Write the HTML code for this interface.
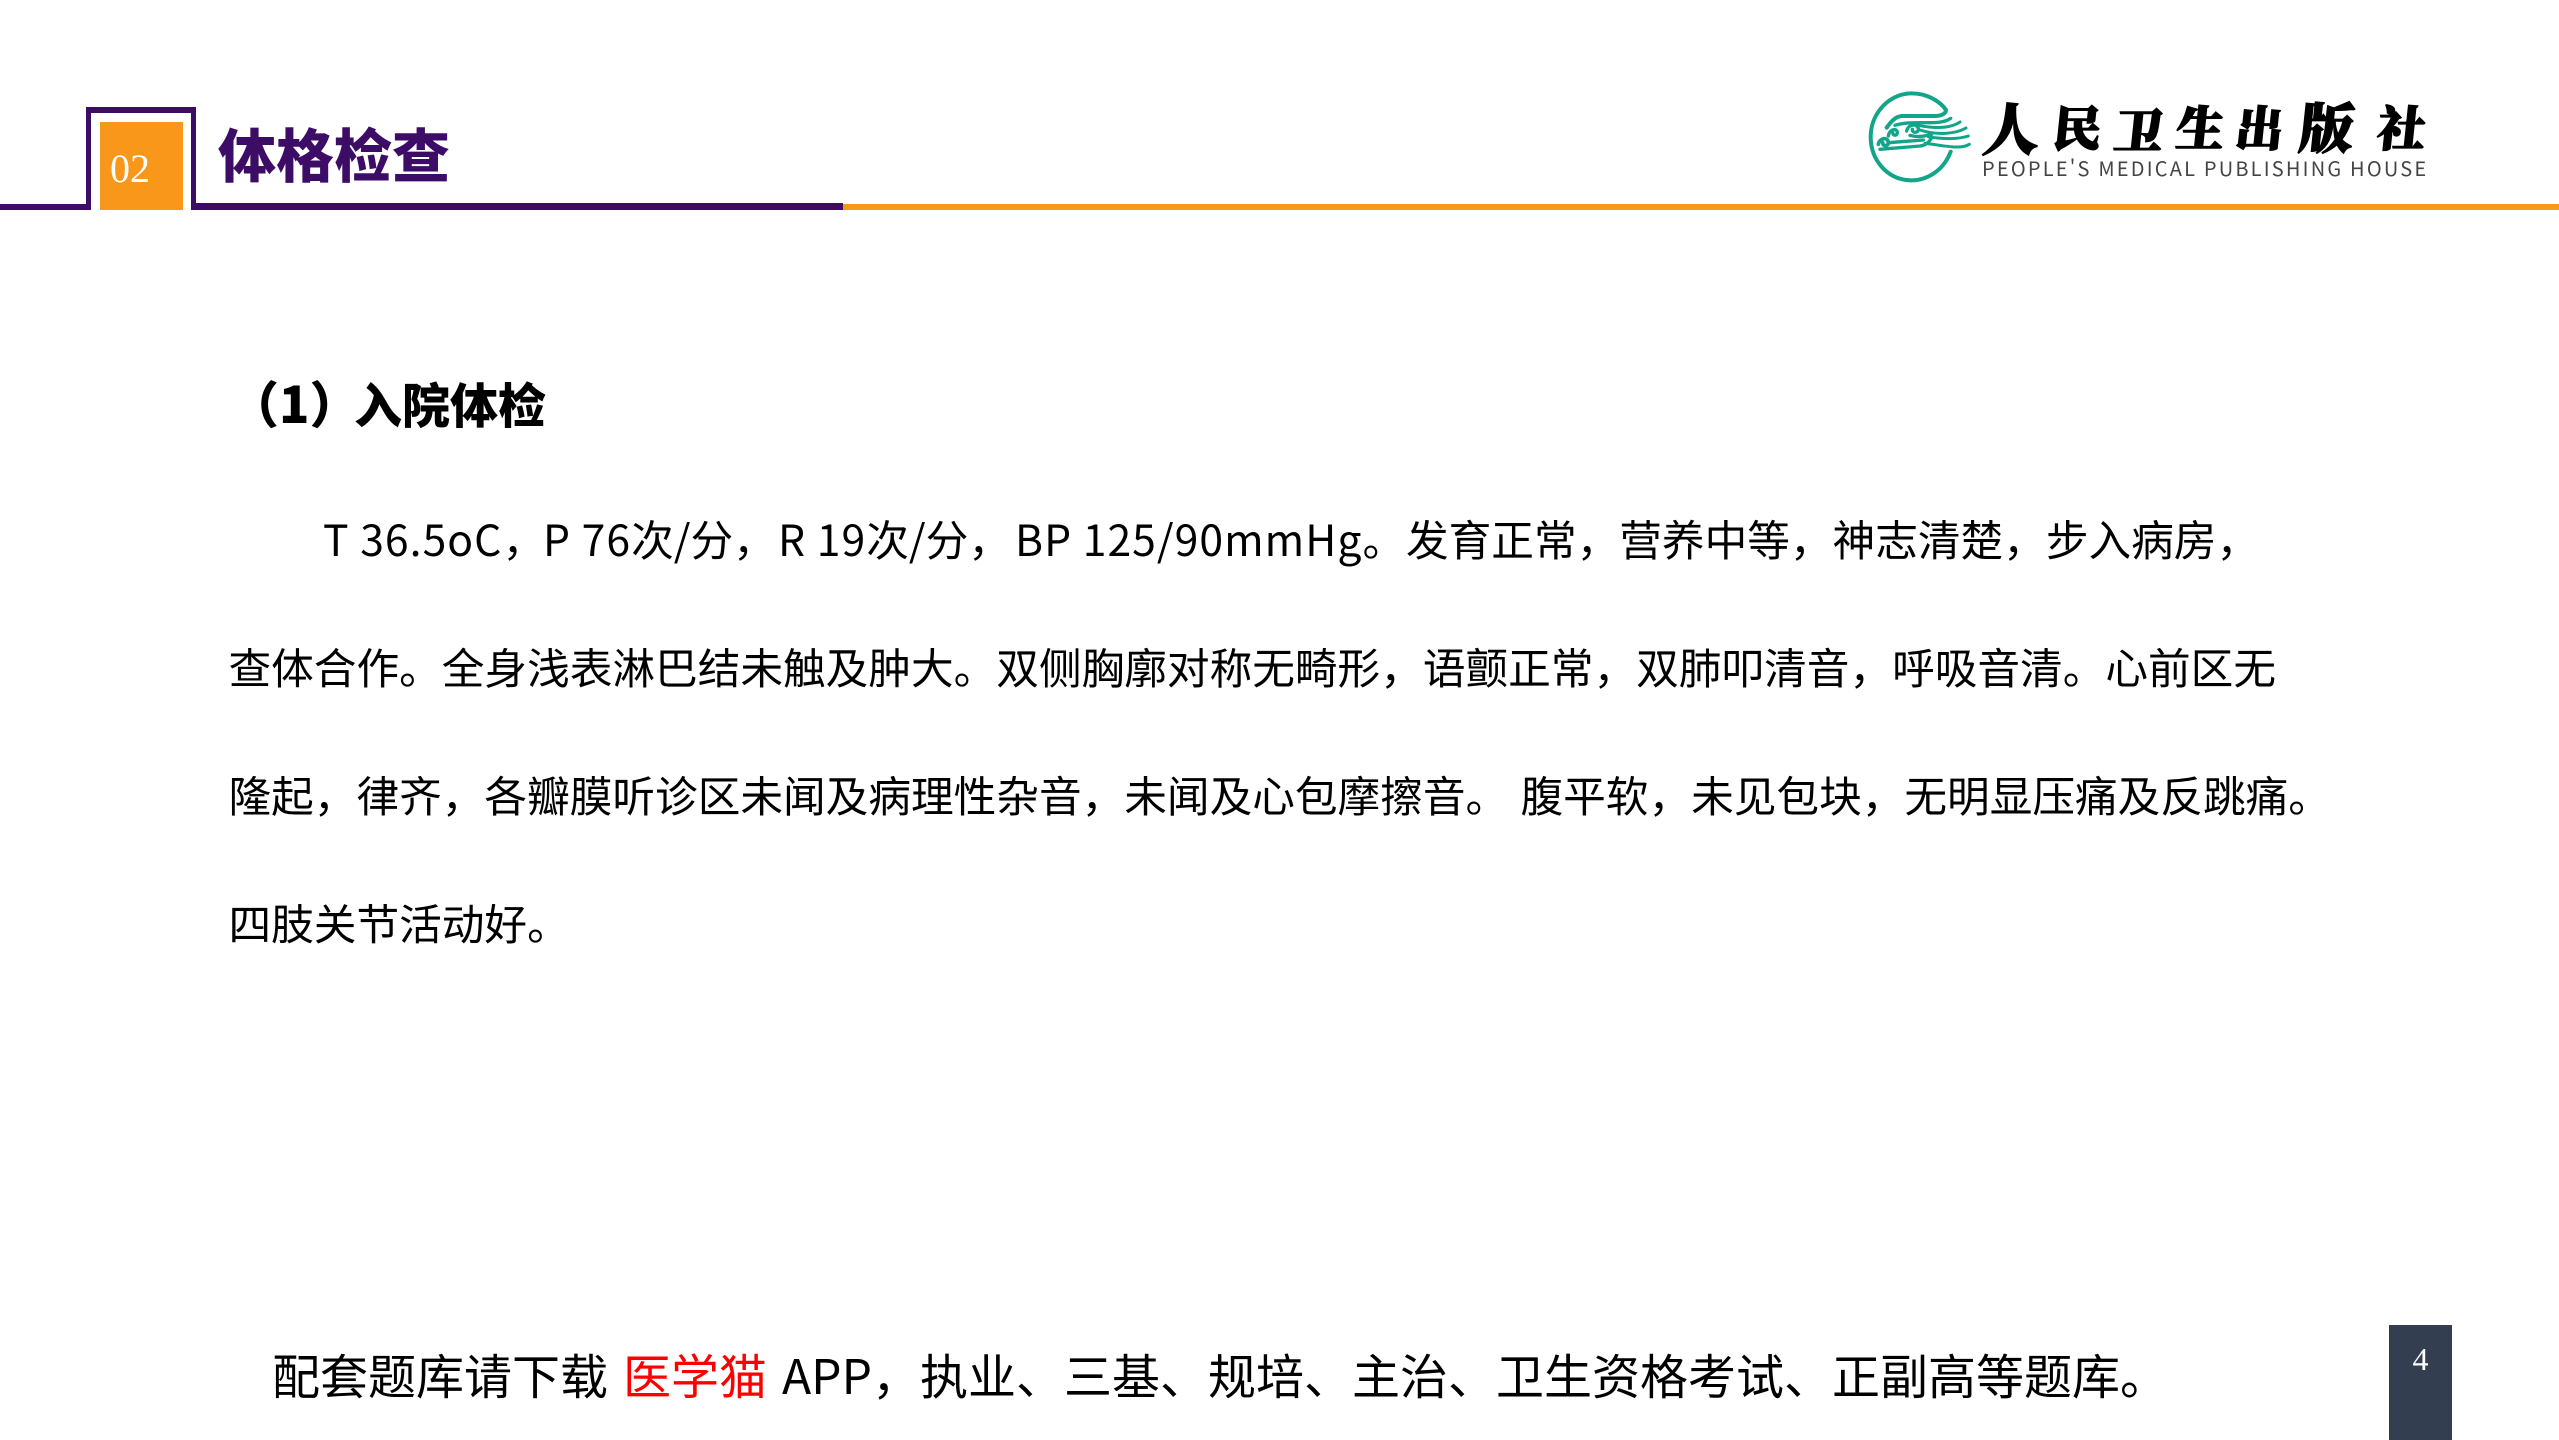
<!DOCTYPE html>
<html lang="zh-CN">
<head>
<meta charset="utf-8">
<title>体格检查</title>
<style>
html,body{margin:0;padding:0;background:#fff;}
body{position:relative;width:2559px;height:1440px;overflow:hidden;font-family:"Liberation Sans","Noto Sans CJK SC",sans-serif;color:#000;}
.a{position:absolute;white-space:pre;}
.t{font-family:"Noto Sans CJK SC","Liberation Sans",sans-serif;font-size:42.67px;line-height:60px;height:60px;}
.t i{font-style:normal;letter-spacing:1.05px;}
.b{font-family:"Noto Sans CJK SC","Liberation Sans",sans-serif;font-size:48px;line-height:70px;height:70px;}
.c{font-family:"Noto Serif CJK SC",serif;font-weight:900;font-size:48px;line-height:60px;height:60px;-webkit-text-stroke:1.6px #000;transform:skewX(-6deg);}
</style>
</head>
<body>
<!-- header lines -->
<div class="a" style="left:0;top:204px;width:91px;height:6px;background:#3c0c66"></div>
<div class="a" style="left:191px;top:203px;width:652px;height:7px;background:#3c0c66"></div>
<div class="a" style="left:843px;top:204px;width:1716px;height:6px;background:#f9971a"></div>
<div class="a" style="left:86px;top:107px;width:110px;height:6px;background:#3c0c66"></div>
<div class="a" style="left:86px;top:107px;width:5px;height:103px;background:#3c0c66"></div>
<div class="a" style="left:191px;top:107px;width:5px;height:103px;background:#3c0c66"></div>
<div class="a" style="left:100px;top:122px;width:83px;height:88px;background:#f9971a"></div>
<div class="a" style="left:110px;top:146px;font-family:'Liberation Serif',serif;font-size:40px;line-height:46px;color:#fff">02</div>
<div class="a" style="left:218px;top:111px;font-family:'Noto Sans CJK SC',sans-serif;font-weight:900;font-size:58px;line-height:82px;color:#3c0c66">体格检查</div>

<!-- logo -->
<svg class="a" style="left:1860px;top:86px" width="120" height="105" viewBox="0 0 360 315" fill="none" stroke="#12a58a" stroke-linecap="round" stroke-linejoin="round">
<path stroke-width="12" d="M272 197C250 255 200 283 155 283C85 283 32 225 32 152C32 80 90 22 155 22C200 22 240 45 258 72C258 82 245 90 225 90L125 90C105 92 92 108 80 125"/>
<path stroke-width="10" d="M105 118C160 100 240 122 272 97"/>
<path stroke-width="9" d="M165 116C220 128 270 128 300 108"/>
<path stroke-width="9" d="M180 132C230 148 285 145 318 126"/>
<path stroke-width="9" d="M205 152C250 160 295 160 325 150"/>
<path stroke-width="9" d="M195 172C250 178 300 192 328 175"/>
<path stroke-width="10" d="M85 150C88 128 112 125 112 140C112 150 98 150 98 140"/>
<path stroke-width="10" d="M140 135C145 112 175 112 175 130C175 142 155 142 157 130"/>
<path stroke-width="11" d="M55 175C58 155 85 152 85 170C85 182 68 182 68 170"/>
<path stroke-width="10" d="M60 190L180 180C195 178 205 172 215 155"/>
<path stroke-width="10" d="M85 170L190 162"/>
<path stroke-width="10" d="M150 148C175 155 195 150 215 145"/>
</svg>
<div class="a c" style="left:1984px;top:95px;font-size:56px;line-height:64px;height:64px">人</div>
<div class="a c" style="left:2054px;top:96px;">民</div>
<div class="a c" style="left:2115px;top:99px;">卫</div>
<div class="a c" style="left:2177px;top:96px;">生</div>
<div class="a c" style="left:2236px;top:96px;">出</div>
<div class="a c" style="left:2300px;top:94px;font-size:54px;line-height:64px;height:64px">版</div>
<div class="a c" style="left:2378px;top:96px;">社</div>
<div class="a" style="left:1982px;top:156px;font-family:'Noto Sans CJK SC',sans-serif;font-size:20px;line-height:24px;letter-spacing:2.2px;color:#444">PEOPLE'S MEDICAL PUBLISHING HOUSE</div>

<!-- heading -->
<div class="a" style="left:229px;top:367px;font-family:'Noto Sans CJK SC',sans-serif;font-weight:900;font-size:50px;line-height:70px">（1）</div>
<div class="a" style="left:354px;top:367px;font-family:'Noto Sans CJK SC',sans-serif;font-weight:900;font-size:48px;line-height:70px">入院体检</div>

<!-- body line 1 -->
<div class="a t" style="left:323px;top:509px"><i>T 36.5oC</i>，</div>
<div class="a t" style="left:543px;top:509px"><i>P 76</i>次/分，</div>
<div class="a t" style="left:778px;top:509px"><i>R 19</i>次/分，</div>
<div class="a t" style="left:1015px;top:509px"><i>BP 125/90mmHg</i>。</div>
<div class="a t" style="left:1406px;top:509px">发育正常，营养中等，神志清楚，步入病房，</div>
<!-- lines 2-4 -->
<div class="a t" style="left:228.5px;top:637px">查体合作。全身浅表淋巴结未触及肿大。双侧胸廓对称无畸形，语颤正常，双肺叩清音，呼吸音清。心前区无</div>
<div class="a t" style="left:228.5px;top:765px">隆起，律齐，各瓣膜听诊区未闻及病理性杂音，未闻及心包摩擦音。</div>
<div class="a t" style="left:1520.5px;top:765px">腹平软，未见包块，无明显压痛及反跳痛。</div>
<div class="a t" style="left:228.5px;top:893px">四肢关节活动好。</div>

<!-- bottom -->
<div class="a b" style="left:272px;top:1338px">配套题库请下载</div>
<div class="a b" style="left:623px;top:1338px;color:#f00">医学猫</div>
<div class="a b" style="left:782px;top:1338px">APP，执业、三基、规培、主治、卫生资格考试、正副高等题库。</div>

<!-- page number -->
<div class="a" style="left:2389px;top:1325px;width:63px;height:115px;background:#333f50"></div>
<div class="a" style="left:2389px;top:1340px;width:63px;text-align:center;font-family:'Liberation Serif',serif;font-size:32px;line-height:38px;color:#fff">4</div>
</body>
</html>
